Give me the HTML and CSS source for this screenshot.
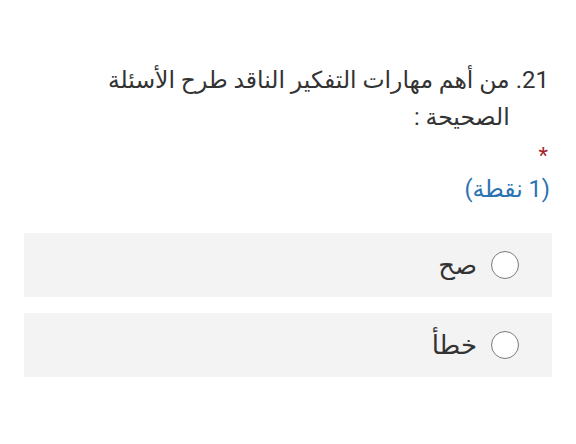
FILE: index.html
```html
<!DOCTYPE html>
<html lang="ar" dir="rtl">
<head>
<meta charset="utf-8">
<link rel="stylesheet" href="styles.css">
</head>
<body>
<div class="page">
  <div class="question">
    <span class="num">21.</span>
    <span class="qtext">من أهم مهارات التفكير الناقد طرح الأسئلة الصحيحة :</span>
  </div>
  <div class="req">*</div>
  <div class="points">(1 نقطة)</div>
  <div class="options">
    <label class="option"><span class="radio"></span><span class="label">صح</span></label>
    <label class="option"><span class="radio"></span><span class="label">خطأ</span></label>
  </div>
</div>
</body>
</html>
```
FILE: styles.css
```css
html, body {
  margin: 0;
  padding: 0;
  background: #ffffff;
}
body {
  font-family: Roboto, "DejaVu Sans", sans-serif;
  color: #333333;
}
.page {
  width: 576px;
  height: 444px;
  box-sizing: border-box;
  padding: 62px 24px 0 24px;
}
.question {
  display: flex;
  align-items: baseline;
  line-height: 37px;
  padding-right: 3px;
}
.num {
  flex: none;
  font-size: 24px;
  margin-left: 6px;
}
.qtext {
  flex: 1;
  font-size: 23.5px;
}
.req {
  color: #a4262c;
  font-size: 22px;
  line-height: 20px;
  margin-top: 10px;
  padding-right: 4px;
}
.points {
  color: #2b73b3;
  font-size: 23.5px;
  line-height: 30px;
  margin-top: 8px;
  padding-right: 2px;
}
.options {
  display: flex;
  flex-direction: column;
  gap: 16px;
  margin-top: 29px;
}
.option {
  display: flex;
  align-items: center;
  height: 64px;
  background: #f3f3f3;
  padding-right: 33px;
  gap: 14px;
}
.radio {
  width: 26px;
  height: 26px;
  border: 1.5px solid #7a7a7a;
  border-radius: 50%;
  background: #ffffff;
  flex: none;
}
.label {
  font-size: 26px;
  color: #333333;
}
```
